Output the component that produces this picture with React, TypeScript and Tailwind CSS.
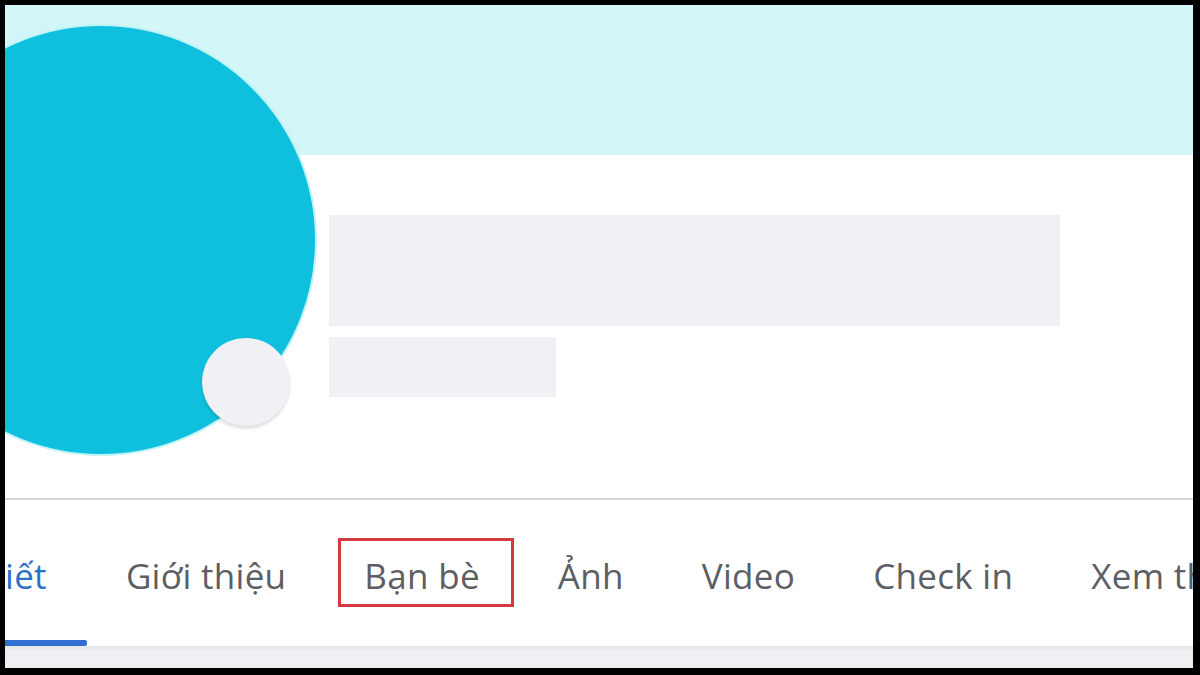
import React from 'react';

const tabs = ['Giới thiệu', 'Bạn bè', 'Ảnh', 'Video', 'Check in', 'Xem thêm'];

export default function App() {
  return (
    <div className="w-[1200px] h-[675px] bg-black pt-[5px] pl-[5px] pr-[7px] pb-[7px]">
      <div className="relative flex h-full flex-col overflow-hidden bg-white font-['Open_Sans',sans-serif]">
        {/* cover */}
        <div className="h-[150px] shrink-0 bg-[#d3f7f8]" />

        {/* header */}
        <div className="relative h-[343px] shrink-0">
          <div className="absolute left-[-120px] top-[-131px] h-[432px] w-[432px] rounded-full border-2 border-[#bff3f8] bg-[#0fbfde]" />
          <div className="absolute left-[197px] top-[183px] h-[88px] w-[88px] rounded-full bg-[#f0f1f5] shadow-[0_3px_3px_rgba(0,0,0,0.12)]" />
          <div className="ml-[324px] mt-[60px] flex flex-col gap-[11px]">
            <div className="h-[111px] w-[731px] bg-[#f0f1f5]" />
            <div className="h-[60px] w-[227px] bg-[#f0f1f5]" />
          </div>
        </div>

        <div className="h-[2px] shrink-0 bg-[#d6d7d9]" />

        {/* tabs */}
        <div className="flex h-[146px] shrink-0 text-[35px] leading-none tracking-[0.3px]">
          <div className="flex flex-col">
            <div className="flex flex-1 items-center pr-[40px] pt-[10px] text-[#2a72c9]">iết</div>
            <div className="h-[6px] rounded-r-[2px] bg-[#2f6fd1]" />
          </div>
          {tabs.map((t) => (
            <div key={t} className="flex shrink-0 flex-col">
              <div className="flex flex-1 items-center whitespace-nowrap px-[39px] pt-[10px] text-[#5c5e63]">
                <span className="relative">
                  {t}
                  {t === 'Bạn bè' && (
                    <span className="absolute -left-[26px] -right-[34px] -top-[20px] -bottom-[14px] border-[3px] border-[#d23a3f]" />
                  )}
                </span>
              </div>
              <div className="h-[6px]" />
            </div>
          ))}
        </div>

        <div className="flex-1 bg-[#eff0f3] shadow-[inset_0_3px_3px_rgba(0,0,0,0.04)]" />
      </div>
    </div>
  );
}
